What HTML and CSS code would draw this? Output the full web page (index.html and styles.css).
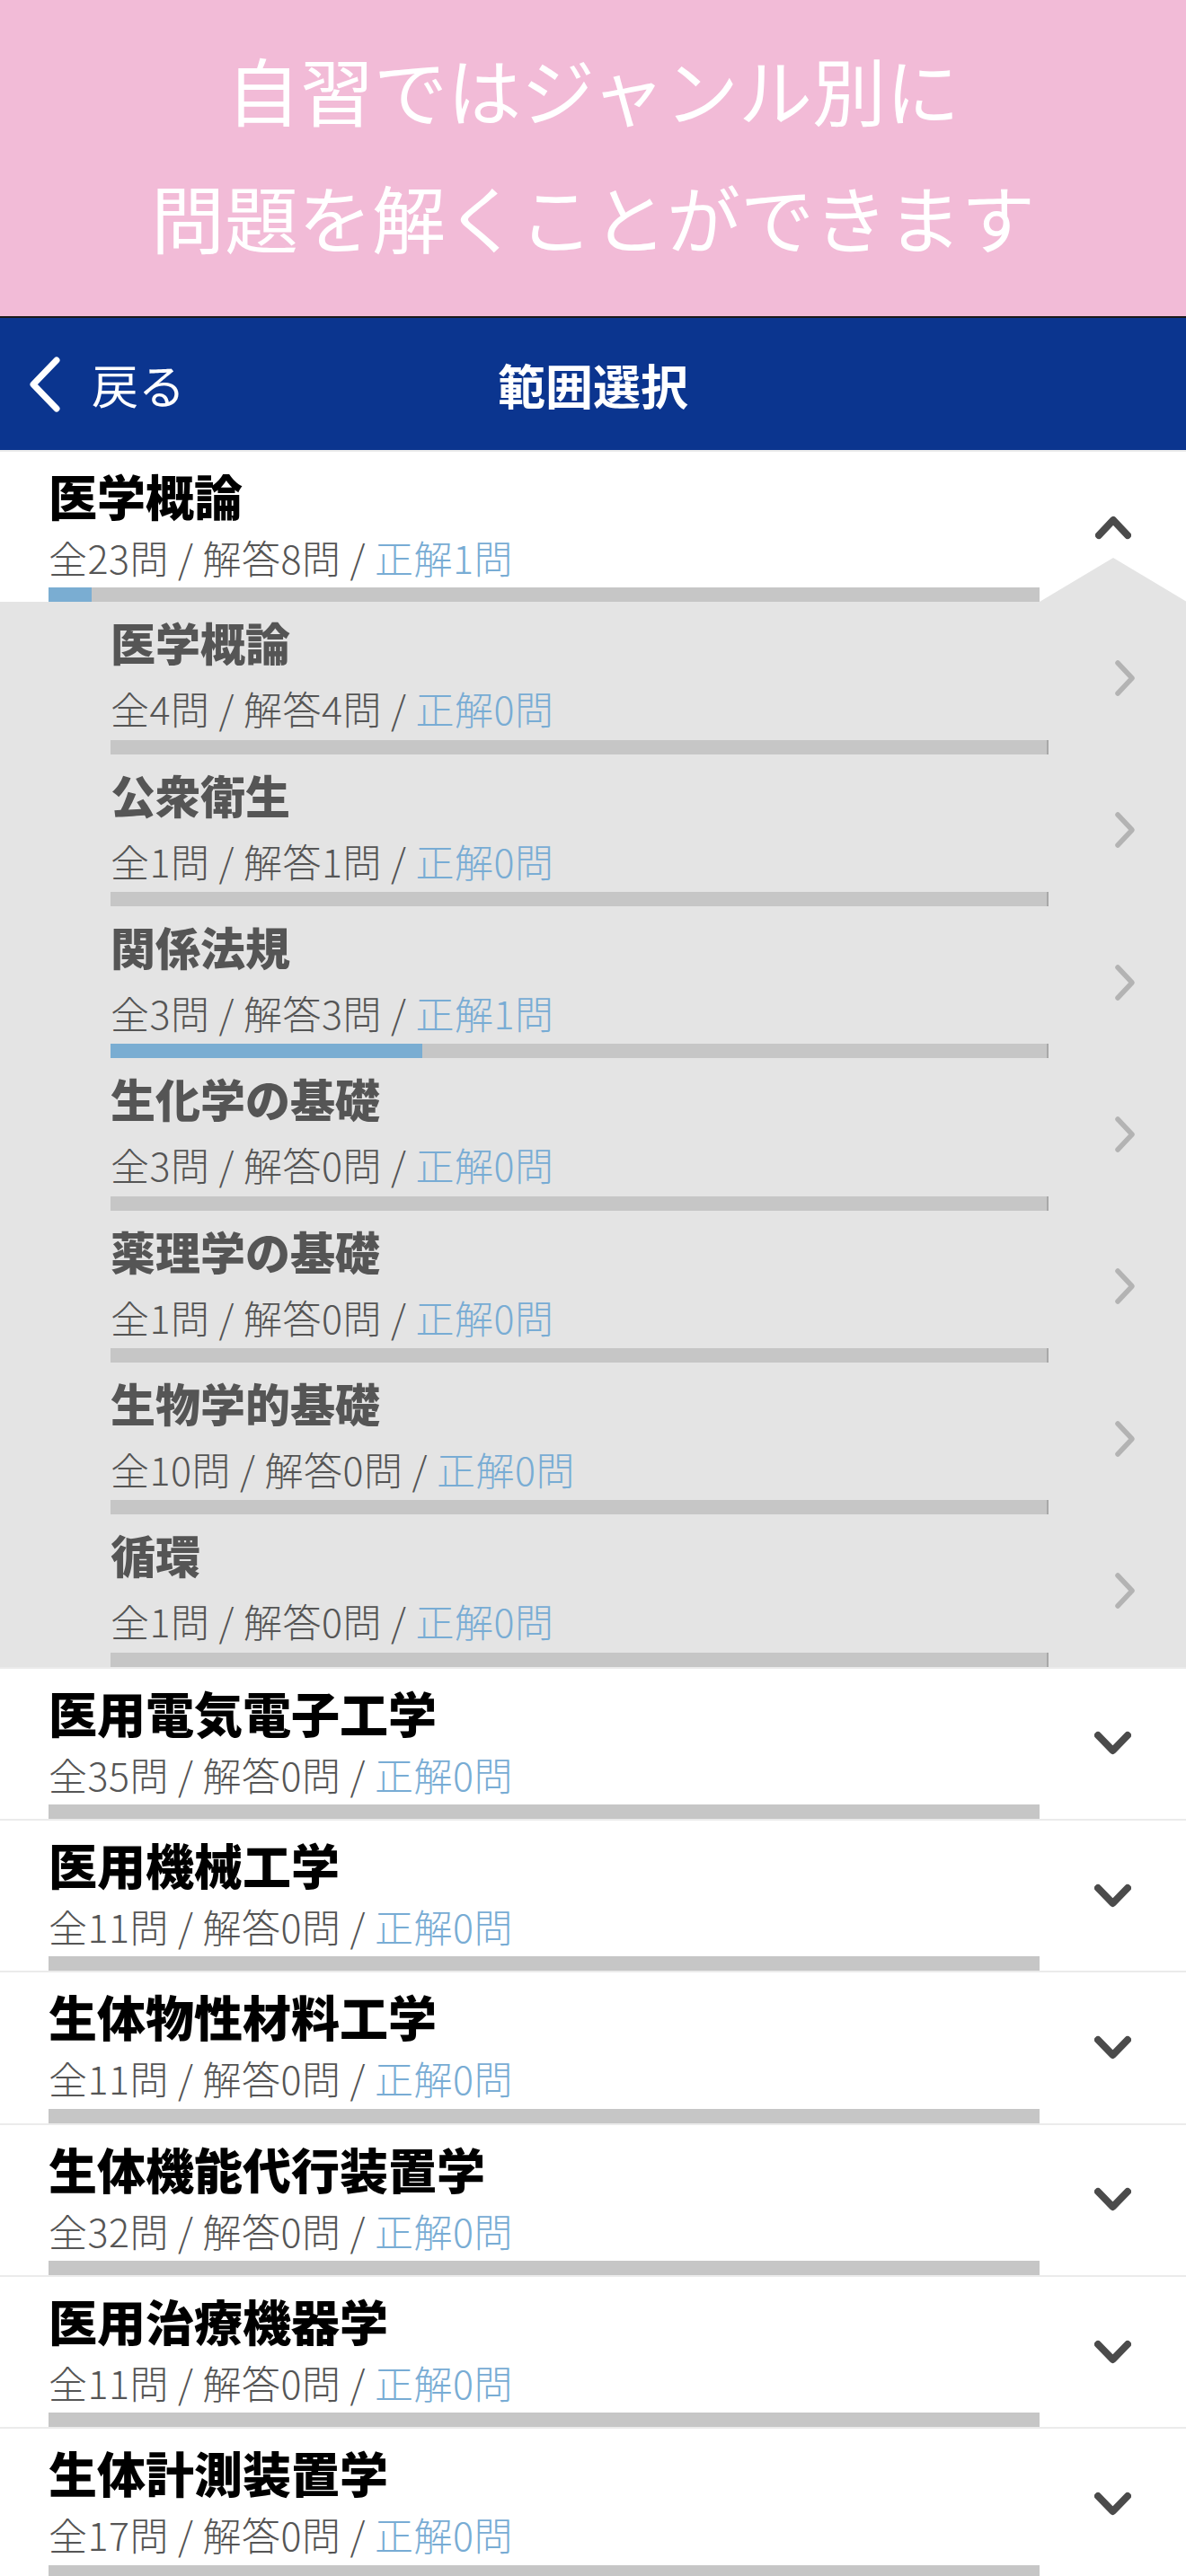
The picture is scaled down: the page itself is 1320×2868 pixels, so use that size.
FILE: index.html
```html
<!DOCTYPE html>
<html lang="ja">
<head>
  <meta charset="UTF-8" />
  <meta name="viewport" content="width=device-width, initial-scale=1" />
  <title>範囲選択</title>
  <link rel="stylesheet" href="styles.css">
</head>
<body>
  <div class="banner">
    <p>自習ではジャンル別に</p>
    <p>問題を解くことができます</p>
  </div>

  <header class="nav">
    <a class="back" href="#">
      <svg width="38" height="64" viewBox="0 0 38 64"><polyline points="32,5 6,32 32,59" fill="none" stroke="#fff" stroke-width="7" stroke-linecap="round" stroke-linejoin="round"/></svg>
      <span>戻る</span>
    </a>
    <h1>範囲選択</h1>
    <div></div>
  </header>

  <main>
    <!-- 展開中のジャンル -->
    <section class="group open">
      <div class="row">
        <div class="info">
          <h2>医学概論</h2>
          <p class="count">全23問 / 解答8問 / <span class="ok">正解1問</span></p>
          <div class="bar"><div class="fill" style="width: 4.35%"></div></div>
        </div>
        <div class="toggle">
          <svg width="40" height="28" viewBox="0 0 40 28"><polyline points="4,23 20,6 36,23" fill="none" stroke="#4b4b4b" stroke-width="8" stroke-linecap="round" stroke-linejoin="round"/></svg>
        </div>
      </div>

      <div class="subs">
        <div class="notch"></div>

        <div class="sub">
          <div class="info">
            <h3>医学概論</h3>
            <p class="count">全4問 / 解答4問 / <span class="ok">正解0問</span></p>
            <div class="bar"><div class="fill" style="width: 0%"></div></div>
          </div>
          <div class="go"><svg width="24" height="42" viewBox="0 0 24 42"><polyline points="4,4 20,21 4,38" fill="none" stroke="#b3b3b3" stroke-width="5.5" stroke-linecap="round" stroke-linejoin="round"/></svg></div>
        </div>

        <div class="sub">
          <div class="info">
            <h3>公衆衛生</h3>
            <p class="count">全1問 / 解答1問 / <span class="ok">正解0問</span></p>
            <div class="bar"><div class="fill" style="width: 0%"></div></div>
          </div>
          <div class="go"><svg width="24" height="42" viewBox="0 0 24 42"><polyline points="4,4 20,21 4,38" fill="none" stroke="#b3b3b3" stroke-width="5.5" stroke-linecap="round" stroke-linejoin="round"/></svg></div>
        </div>

        <div class="sub">
          <div class="info">
            <h3>関係法規</h3>
            <p class="count">全3問 / 解答3問 / <span class="ok">正解1問</span></p>
            <div class="bar"><div class="fill" style="width: 33.33%"></div></div>
          </div>
          <div class="go"><svg width="24" height="42" viewBox="0 0 24 42"><polyline points="4,4 20,21 4,38" fill="none" stroke="#b3b3b3" stroke-width="5.5" stroke-linecap="round" stroke-linejoin="round"/></svg></div>
        </div>

        <div class="sub">
          <div class="info">
            <h3>生化学の基礎</h3>
            <p class="count">全3問 / 解答0問 / <span class="ok">正解0問</span></p>
            <div class="bar"><div class="fill" style="width: 0%"></div></div>
          </div>
          <div class="go"><svg width="24" height="42" viewBox="0 0 24 42"><polyline points="4,4 20,21 4,38" fill="none" stroke="#b3b3b3" stroke-width="5.5" stroke-linecap="round" stroke-linejoin="round"/></svg></div>
        </div>

        <div class="sub">
          <div class="info">
            <h3>薬理学の基礎</h3>
            <p class="count">全1問 / 解答0問 / <span class="ok">正解0問</span></p>
            <div class="bar"><div class="fill" style="width: 0%"></div></div>
          </div>
          <div class="go"><svg width="24" height="42" viewBox="0 0 24 42"><polyline points="4,4 20,21 4,38" fill="none" stroke="#b3b3b3" stroke-width="5.5" stroke-linecap="round" stroke-linejoin="round"/></svg></div>
        </div>

        <div class="sub">
          <div class="info">
            <h3>生物学的基礎</h3>
            <p class="count">全10問 / 解答0問 / <span class="ok">正解0問</span></p>
            <div class="bar"><div class="fill" style="width: 0%"></div></div>
          </div>
          <div class="go"><svg width="24" height="42" viewBox="0 0 24 42"><polyline points="4,4 20,21 4,38" fill="none" stroke="#b3b3b3" stroke-width="5.5" stroke-linecap="round" stroke-linejoin="round"/></svg></div>
        </div>

        <div class="sub">
          <div class="info">
            <h3>循環</h3>
            <p class="count">全1問 / 解答0問 / <span class="ok">正解0問</span></p>
            <div class="bar"><div class="fill" style="width: 0%"></div></div>
          </div>
          <div class="go"><svg width="24" height="42" viewBox="0 0 24 42"><polyline points="4,4 20,21 4,38" fill="none" stroke="#b3b3b3" stroke-width="5.5" stroke-linecap="round" stroke-linejoin="round"/></svg></div>
        </div>
      </div>
    </section>

    <!-- 閉じているジャンル -->
    <section class="group">
      <div class="row">
        <div class="info">
          <h2>医用電気電子工学</h2>
          <p class="count">全35問 / 解答0問 / <span class="ok">正解0問</span></p>
          <div class="bar"><div class="fill" style="width: 0%"></div></div>
        </div>
        <div class="toggle"><svg width="41" height="28" viewBox="0 0 41 28"><polyline points="4,5 20.5,22 37,5" fill="none" stroke="#4b4b4b" stroke-width="8" stroke-linecap="round" stroke-linejoin="round"/></svg></div>
      </div>
    </section>

    <section class="group">
      <div class="row">
        <div class="info">
          <h2>医用機械工学</h2>
          <p class="count">全11問 / 解答0問 / <span class="ok">正解0問</span></p>
          <div class="bar"><div class="fill" style="width: 0%"></div></div>
        </div>
        <div class="toggle"><svg width="41" height="28" viewBox="0 0 41 28"><polyline points="4,5 20.5,22 37,5" fill="none" stroke="#4b4b4b" stroke-width="8" stroke-linecap="round" stroke-linejoin="round"/></svg></div>
      </div>
    </section>

    <section class="group">
      <div class="row">
        <div class="info">
          <h2>生体物性材料工学</h2>
          <p class="count">全11問 / 解答0問 / <span class="ok">正解0問</span></p>
          <div class="bar"><div class="fill" style="width: 0%"></div></div>
        </div>
        <div class="toggle"><svg width="41" height="28" viewBox="0 0 41 28"><polyline points="4,5 20.5,22 37,5" fill="none" stroke="#4b4b4b" stroke-width="8" stroke-linecap="round" stroke-linejoin="round"/></svg></div>
      </div>
    </section>

    <section class="group">
      <div class="row">
        <div class="info">
          <h2>生体機能代行装置学</h2>
          <p class="count">全32問 / 解答0問 / <span class="ok">正解0問</span></p>
          <div class="bar"><div class="fill" style="width: 0%"></div></div>
        </div>
        <div class="toggle"><svg width="41" height="28" viewBox="0 0 41 28"><polyline points="4,5 20.5,22 37,5" fill="none" stroke="#4b4b4b" stroke-width="8" stroke-linecap="round" stroke-linejoin="round"/></svg></div>
      </div>
    </section>

    <section class="group">
      <div class="row">
        <div class="info">
          <h2>医用治療機器学</h2>
          <p class="count">全11問 / 解答0問 / <span class="ok">正解0問</span></p>
          <div class="bar"><div class="fill" style="width: 0%"></div></div>
        </div>
        <div class="toggle"><svg width="41" height="28" viewBox="0 0 41 28"><polyline points="4,5 20.5,22 37,5" fill="none" stroke="#4b4b4b" stroke-width="8" stroke-linecap="round" stroke-linejoin="round"/></svg></div>
      </div>
    </section>

    <section class="group">
      <div class="row">
        <div class="info">
          <h2>生体計測装置学</h2>
          <p class="count">全17問 / 解答0問 / <span class="ok">正解0問</span></p>
          <div class="bar"><div class="fill" style="width: 0%"></div></div>
        </div>
        <div class="toggle"><svg width="41" height="28" viewBox="0 0 41 28"><polyline points="4,5 20.5,22 37,5" fill="none" stroke="#4b4b4b" stroke-width="8" stroke-linecap="round" stroke-linejoin="round"/></svg></div>
      </div>
    </section>
  </main>
</body>
</html>
```

FILE: styles.css
```css
body {
  margin: 0;
  background: #fff;
  font-family: "Noto Sans CJK JP", "Noto Sans", sans-serif;
  color: #555;
}
.banner {
  box-sizing: border-box;
  height: 354px;
  padding-bottom: 12px;
  background: #f2bbd7;
  border-bottom: 2px solid #1a1a1a;
  display: flex;
  flex-direction: column;
  justify-content: center;
  align-items: center;
  color: #fff;
  font-size: 82px;
  font-weight: 400;
  line-height: 142px;
}
.banner p {
  margin: 0;
}
.nav {
  height: 147px;
  background: #0b358f;
  display: grid;
  grid-template-columns: 1fr auto 1fr;
  align-items: center;
}
.nav h1 {
  margin: 0;
  color: #fff;
  font-size: 53px;
  font-weight: 700;
}
.back {
  display: flex;
  align-items: center;
  padding-left: 31px;
  color: #fff;
  text-decoration: none;
  font-size: 52px;
  font-weight: 400;
}
.back svg {
  display: block;
}
.back span {
  margin-left: 33px;
}

.group {
  border-top: 2px solid #ebebeb;
}
.row {
  display: flex;
  height: 167.33px;
  background: #fff;
}
.info {
  flex: 1;
  display: flex;
  flex-direction: column;
  padding-left: 54px;
}
.row .info {
  padding-top: 17px;
}
.info h2 {
  margin: 0;
  color: #000;
  font-size: 54px;
  line-height: 64px;
  font-weight: 900;
}
.count {
  margin: 10px 0 0;
  font-size: 43px;
  line-height: 52px;
  letter-spacing: 0.5px;
  color: #555;
  font-weight: 300;
  white-space: nowrap;
}
.ok {
  color: #78acd4;
}
.bar {
  margin-top: auto;
  height: 16px;
  background: #c6c6c6;
}
.fill {
  height: 100%;
  background: #7aadd2;
}
.toggle {
  width: 163px;
  display: flex;
  justify-content: center;
  align-items: center;
}
.toggle svg,
.go svg {
  display: block;
}

/* 展開部分 */
.subs {
  position: relative;
  background: #e4e4e4;
}
.notch {
  position: absolute;
  right: -1px;
  top: -49px;
  width: 0;
  height: 0;
  border-left: 82px solid transparent;
  border-right: 82px solid transparent;
  border-bottom: 49px solid #e4e4e4;
}
.sub {
  display: flex;
  height: 169.33px;
}
.sub .info {
  padding-left: 123px;
  padding-top: 14px;
}
.sub h3 {
  margin: 0;
  color: #555;
  font-size: 50px;
  line-height: 60px;
  font-weight: 900;
}
.sub .count {
  margin-top: 18px;
}
.sub .bar {
  border-right: 2px solid #a8a8a8;
}
.go {
  width: 153px;
  display: flex;
  align-items: center;
  padding-left: 73px;
  box-sizing: border-box;
}
```
